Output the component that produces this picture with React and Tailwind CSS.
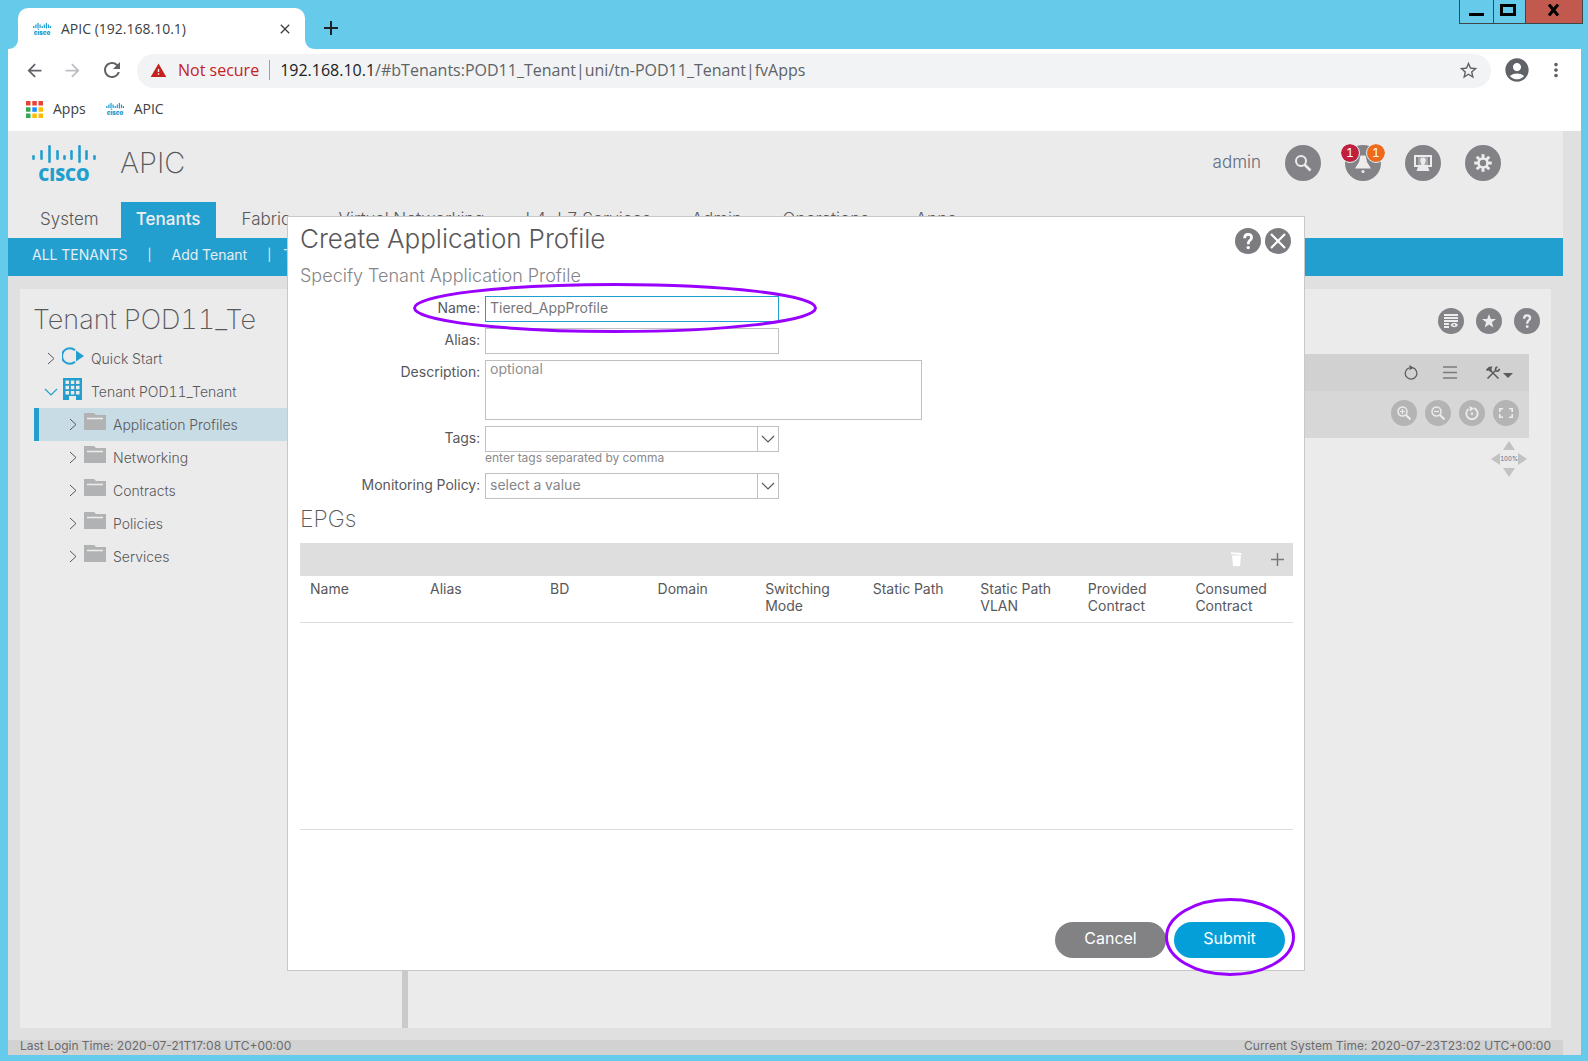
import React from "react";
import { MdAccountCircle, MdArrowBack, MdArrowForward, MdClose, MdMoreVert, MdRefresh, MdStarBorder, MdWarning } from "react-icons/md";

const UI = "font-['Inter',sans-serif] tabular-nums";
const CHROME = "font-['Open_Sans','Noto_Sans',sans-serif]";

function CiscoLogo() {
  const bars = [[1, 10, 15], [9, 5, 15], [17, 0, 18], [25, 5, 15], [32, 10, 15], [39, 5, 15], [47, 0, 18], [54, 5, 15], [62, 10, 15]];
  return (
    <svg viewBox="0 0 64 37" className="h-[37px] w-16 shrink-0 overflow-visible text-[#239fcf]" role="img" aria-label="Cisco">
      {bars.map(([x, a, b]) => (
        <line key={x} x1={x + 0.5} x2={x + 0.5} y1={a + 1.2} y2={b - 1.2} stroke="currentColor" strokeWidth="2.6" strokeLinecap="round" />
      ))}
      <text x="32" y="36" textAnchor="middle" fontFamily="Open Sans, sans-serif" fontWeight="800" fontSize="17" fill="currentColor">CISCO</text>
    </svg>
  );
}

function CiscoMark() {
  const bars = [[0.8, 3, 5], [2.9, 1.5, 5], [5, 0, 5.6], [7.1, 1.5, 5], [9.2, 3, 5], [11.3, 1.5, 5], [13.4, 0, 5.6], [15.5, 1.5, 5], [17.4, 3, 5]];
  return (
    <svg viewBox="0 0 18 12" className="h-3 w-[18px] shrink-0 overflow-visible text-[#1a9bd0]" aria-hidden="true">
      {bars.map(([x, a, b]) => (
        <line key={x} x1={x} x2={x} y1={a} y2={b} stroke="currentColor" strokeWidth="1.2" />
      ))}
      <text x="9" y="11.6" textAnchor="middle" fontFamily="Inter, sans-serif" fontWeight="900" fontSize="6" fill="currentColor">cisco</text>
    </svg>
  );
}

function Chevron({ down, className = "" }) {
  return down ? (
    <svg viewBox="0 0 14 8" className={"h-2 w-3.5 shrink-0 " + className} aria-hidden="true">
      <path d="M1 1l6 6 6-6" fill="none" stroke="currentColor" strokeWidth="1.2" />
    </svg>
  ) : (
    <svg viewBox="0 0 8 13" className={"h-[13px] w-2 shrink-0 " + className} aria-hidden="true">
      <path d="M1 1l6 5.500-6 5.500" fill="none" stroke="currentColor" strokeWidth="1" />
    </svg>
  );
}

function Folder() {
  return (
    <svg viewBox="0 0 22 17" className="h-[17px] w-[22px] shrink-0" aria-hidden="true">
      <path d="M0 0h10l2 2h10v15H0z" fill="#b1b2b3" />
      <path d="M3 5.500h16" stroke="#ebebeb" strokeWidth="1.600" />
    </svg>
  );
}

function QuestionGlyph({ className }) {
  return (
    <svg viewBox="0 0 26 26" className={className} aria-hidden="true">
      <path d="M9.600 10.200C9.600 7.600 11 6.300 13.100 6.300s3.500 1.300 3.500 3.200c0 2.800-3.300 2.900-3.300 5.900v.8" fill="none" stroke="currentColor" strokeWidth="2.700" />
      <circle cx="13.200" cy="19.600" r="1.700" fill="currentColor" />
    </svg>
  );
}

function Round({ label, size, tone = "bg-[#828287]", children }) {
  return (
    <button type="button" aria-label={label} className={"flex shrink-0 items-center justify-center rounded-full text-[#ececec] " + size + " " + tone}>
      {children}
    </button>
  );
}

function Browser() {
  return (
    <>
      <div className="flex h-[49px] items-end pl-2 pr-[5px]">
        <svg viewBox="0 0 10 10" className="size-2.5" aria-hidden="true"><path d="M10 0v10H0C6 10 10 6 10 0z" fill="#fff" /></svg>
        <div className="flex h-[41px] w-[287px] items-center rounded-t-[10px] bg-white pl-[15px] pr-3">
          <CiscoMark />
          <span className="ml-2.5 grow text-sm text-[#3c4043]">APIC (192.168.10.1)</span>
          <button type="button" aria-label="Close tab" className="text-[#3c4043]"><MdClose size={16} /></button>
        </div>
        <svg viewBox="0 0 10 10" className="size-2.5" aria-hidden="true"><path d="M0 0v10h10C4 10 0 6 0 0z" fill="#fff" /></svg>
        <button type="button" aria-label="New tab" className="mb-3.5 ml-[9px] text-[#202124]">
          <svg viewBox="0 0 14 14" className="size-3.5"><path d="M7 0v14M0 7h14" stroke="currentColor" strokeWidth="2" /></svg>
        </button>
        <div className="ml-auto flex h-6 self-start border-x border-b border-[#3f4648] text-black">
          <button type="button" aria-label="Minimize" className="flex w-[34px] justify-center border-r border-[#3f4648] pt-[13px]">
            <span className="h-[3px] w-[15px] bg-black" />
          </button>
          <button type="button" aria-label="Maximize" className="flex w-8 justify-center border-r border-[#3f4648] pt-1 pr-1">
            <span className="h-3 w-4 border-3 border-black" />
          </button>
          <button type="button" aria-label="Close window" className="flex w-14 justify-center bg-[#c1594f] pt-1 pr-0.5">
            <svg viewBox="0 0 13 12" className="h-3 w-[13px]"><path d="M2 0.500l9 11M11 0.500l-9 11" stroke="#000" strokeWidth="3" /></svg>
          </button>
        </div>
      </div>
      <div className="mr-[7px] ml-2 h-[82px] bg-white pt-[5px]">
        <div className="flex h-[34px] items-center">
          <button type="button" aria-label="Back" className="mb-0.5 ml-4 text-[#5f6368]"><MdArrowBack size={21} /></button>
          <button type="button" aria-label="Forward" className="mb-0.5 ml-[17px] text-[#bcbec1]"><MdArrowForward size={21} /></button>
          <button type="button" aria-label="Reload" className="mb-0.5 ml-[17px] text-[#5f6368]"><MdRefresh size={24} /></button>
          <div className="ml-[13px] flex h-[34px] grow items-center rounded-full bg-[#f1f3f4] pr-3 pb-0.5 pl-[13px]">
            <MdWarning size={17} className="text-[#c5221f]" />
            <span className="ml-[11px] text-base text-[#c5221f]">Not secure</span>
            <span className="mx-2.5 h-5 w-px bg-[#9aa0a6]" />
            <span className="grow text-base text-[#5f6368]"><span className="text-[#202124]">192.168.10.1</span>/#bTenants:POD11_Tenant|uni/tn-POD11_Tenant|fvApps</span>
            <button type="button" aria-label="Bookmark this page" className="text-[#5f6368]"><MdStarBorder size={21} /></button>
          </div>
          <button type="button" aria-label="Profile" className="mb-0.5 ml-3 text-[#5f6368]"><MdAccountCircle size={28} /></button>
          <button type="button" aria-label="Browser menu" className="mx-3.5 mb-0.5 text-[#5f6368]"><MdMoreVert size={22} /></button>
        </div>
        <div className="flex h-[42px] items-center text-sm text-[#3c4043]">
          <button type="button" className="ml-[18px] flex items-center gap-2.5">
            <svg viewBox="0 0 17 17" className="size-[17px]" aria-hidden="true">
              <path d="M0 0h4.500v4.500H0zM6.300 0h4.500v4.500H6.300zM12.500 0H17v4.500h-4.500z" fill="#ea4335" />
              <path d="M0 6.300h4.500v4.500H0zM0 12.500h4.500V17H0z" fill="#34a853" />
              <path d="M6.300 6.300h4.500v4.500H6.300z" fill="#1a8cff" />
              <path d="M12.500 6.300H17v4.500h-4.500zM6.300 12.500h4.500V17H6.300zM12.500 12.500H17V17h-4.500z" fill="#fbbc04" />
            </svg>
            Apps
          </button>
          <a href="#apic" className="ml-5 flex items-center gap-2.5"><CiscoMark />APIC</a>
        </div>
      </div>
    </>
  );
}

const TABS = [
  ["Fabric", "w-[58px]"], ["Virtual Networking", "w-[148px]"], ["L4-L7 Services", "w-[127px]"],
  ["Admin", "w-[52px]"], ["Operations", "w-[94px]"], ["Apps", "w-10"],
];

function GearIcon() {
  return (
    <svg viewBox="-9 -9 18 18" className="size-[18px]" aria-hidden="true">
      <circle r="4.500" fill="none" stroke="currentColor" strokeWidth="2.600" />
      {[0, 45, 90, 135, 180, 225, 270, 315].map((a) => (
        <path key={a} d="M-1.500 -8.800h3V-5h-3z" fill="currentColor" transform={"rotate(" + a + ")"} />
      ))}
    </svg>
  );
}

function Header() {
  return (
    <header className="mr-[18px] bg-[#ebebeb]">
      <div className="flex h-[71px] items-center pr-[62px] pb-[7px] pl-6">
        <CiscoLogo />
        <h1 className="ml-6 text-[29px] leading-8 font-extralight text-[#58585b]">APIC</h1>
        <span className="ml-auto text-[17px] font-light text-[#5c6a7c]">admin</span>
        <div className="ml-6 flex gap-6">
          <Round label="Search" size="size-9">
            <svg viewBox="0 0 18 18" className="size-[18px]"><circle cx="7" cy="7" r="5" fill="none" stroke="currentColor" strokeWidth="2" /><path d="M10.500 10.500l6 6" stroke="currentColor" strokeWidth="2.600" /></svg>
          </Round>
          <div className="relative">
            <Round label="Alerts" size="size-9">
              <svg viewBox="0 0 18 18" className="mt-0.5 size-[18px]"><path d="M6.500 0.500h5l1.500 6.500 4 6.500H1l4-6.500z" fill="currentColor" /><circle cx="9" cy="16.500" r="1.500" fill="currentColor" /></svg>
            </Round>
            <span className="absolute -top-px -left-1 flex size-[18px] items-center justify-center rounded-full bg-[#c0203d] text-xs text-white outline outline-[#ebebeb]">1</span>
            <span className="absolute -top-px -right-1 flex size-[18px] items-center justify-center rounded-full bg-[#f06a1c] text-xs text-white outline outline-[#ebebeb]">1</span>
          </div>
          <Round label="Sessions" size="size-9">
            <svg viewBox="0 0 18 16" className="h-4 w-[18px]"><path d="M0 0h18v12H0z" fill="currentColor" /><path d="M2 2h14v8H2z" fill="#828287" /><path d="M4 2h10v8H4z" fill="currentColor" opacity=".35" /><path d="M9 2.500c2 0 3 1.500 2.700 3.500-.2 1.500-1.200 2-1.200 4h-3c0-2-1-2.500-1.200-4C6 4 7 2.500 9 2.500zM4 12h10l1.500 4h-13z" fill="currentColor" /></svg>
          </Round>
          <Round label="Settings" size="size-9"><GearIcon /></Round>
        </div>
      </div>
      <nav aria-label="Main" className="flex h-9 text-[17px] font-light text-[#58585b]">
        <a href="#system" className="flex items-center pr-[22px] pl-8">System</a>
        <a href="#tenants" aria-current="page" className="flex w-[95px] items-center justify-center bg-[#239fcf] font-medium text-[#f0f0f0]">Tenants</a>
        <div className="flex items-center gap-[39px] pl-[26px]">
          {TABS.map(([t, w]) => <a key={t} href={"#" + t} className={"whitespace-nowrap " + w}>{t}</a>)}
        </div>
      </nav>
      <nav aria-label="Tenants" className="flex h-[38px] items-center bg-[#239fcf] pb-1 pl-6 text-sm text-[#e6eef2]">
        <a href="#all">ALL TENANTS</a>
        <span className="mx-5 text-xs">|</span>
        <a href="#add">Add Tenant</a>
        <span className="mr-3 ml-5 text-xs">|</span>
        <span>Tenant</span>
      </nav>
    </header>
  );
}

const FOLDERS = ["Application Profiles", "Networking", "Contracts", "Policies", "Services"];

function Sidebar() {
  return (
    <aside className="w-[382px] pt-3.5 pl-[13px]">
      <h2 className="h-[39px] text-[27px] leading-[34px] font-extralight whitespace-nowrap text-[#58585b]">Tenant POD11_Te</h2>
      <ul className="text-sm font-light text-[#58585b]">
        <li className="flex h-[33px] items-center pl-3.5">
          <Chevron />
          <svg viewBox="0 0 22 18" className="mb-1.5 ml-[7px] h-[18px] w-[22px]" aria-hidden="true"><path d="M13 3.200A7.800 7.800 0 1 0 13 14.800" fill="none" stroke="#239fcf" strokeWidth="2" /><path d="M14 3.500l8 5.500-8 5.500z" fill="#239fcf" /></svg>
          <a href="#quick-start" className="ml-[7px]">Quick Start</a>
        </li>
        <li className="flex h-[33px] items-center pl-[11px]">
          <Chevron down className="text-[#239fcf]" />
          <svg viewBox="0 0 19 22" className="mb-1.5 ml-[5px] h-[22px] w-[19px]" aria-hidden="true">
            <path d="M0 0h19v22h-6v-4H6v4H0z" fill="#239fcf" />
            <path d="M2.500 2.500h3.500v3.500H2.500zM7.800 2.500h3.500v3.500H7.800zM13 2.500h3.500v3.500H13zM2.500 7.800h3.500v3.500H2.500zM7.800 7.800h3.500v3.500H7.800zM13 7.800h3.500v3.500H13zM2.500 13h3.500v3.500H2.500zM7.800 13h3.500v3.500H7.800zM13 13h3.500v3.500H13z" fill="#ebebeb" />
          </svg>
          <a href="#tenant" className="ml-[9px]">Tenant POD11_Tenant</a>
        </li>
        {FOLDERS.map((f, i) => (
          <li key={f} className={"ml-px flex h-[33px] items-center border-l-5 pl-[30px] " + (i === 0 ? "border-[#239fcf] bg-[#c8dce5]" : "border-transparent")}>
            <Chevron />
            <span className="mb-1.5 ml-[7px]"><Folder /></span>
            <a href={"#" + f} className="ml-[7px]">{f}</a>
          </li>
        ))}
      </ul>
    </aside>
  );
}

function Workspace() {
  const pale = "bg-[#b4b4b4]";
  return (
    <section className="grow pt-[19px]">
      <div className="flex justify-end gap-3 pr-[11px]">
        <Round label="Show tasks" size="size-[26px]">
          <svg viewBox="0 0 14 14" className="size-3.5"><path d="M0 1h14M0 4h14M0 7h14M0 10h5M0 13h5" stroke="currentColor" strokeWidth="1.800" /><path d="M6.500 11c2-3 5.500-3 7.500 0-2 3-5.500 3-7.500 0z" fill="currentColor" /><circle cx="10.200" cy="11" r="1" fill="#828287" /></svg>
        </Round>
        <Round label="Favorite" size="size-[26px]">
          <svg viewBox="0 0 14 14" className="size-3.5"><path d="M7 0l1.800 4.900 5.200.2-4.100 3.200 1.400 5.100L7 10.500l-4.300 2.900 1.400-5.100L0 5.100l5.200-.2z" fill="currentColor" /></svg>
        </Round>
        <Round label="Help" size="size-[26px]"><QuestionGlyph className="size-[22px]" /></Round>
      </div>
      <div className="mt-5 mr-[22px]">
        <div className="flex h-[37px] items-center justify-end bg-[#d1d1d1] pr-4 text-[#5b5b5e]">
          <button type="button" aria-label="Refresh">
            <svg viewBox="0 0 14 15" className="h-[15px] w-3.5"><path d="M8.500 2.700A5.800 5.800 0 1 1 5 2.900" fill="none" stroke="currentColor" strokeWidth="1.200" /><path d="M5.500 0l4 2.700-4 2.500z" fill="currentColor" /></svg>
          </button>
          <button type="button" aria-label="List" className="ml-[25px]">
            <svg viewBox="0 0 14 13" className="h-[13px] w-3.5"><path d="M0 1h14M0 6.500h14M0 12h14" stroke="#7b7b7e" strokeWidth="1.500" /></svg>
          </button>
          <button type="button" aria-label="Tools" className="ml-[29px] flex items-end gap-[3px]">
            <svg viewBox="0 0 14 13" className="h-[13px] w-3.5"><path d="M4.500 4.500l8 8M1.500 12.500l8-8" stroke="currentColor" strokeWidth="1.500" /><path d="M0 3.500L3 .8 6.500.5 5.500 3 6 4.500 4.200 6 2.800 4.600 1 5z" fill="currentColor" /><path d="M11.500 1.200C9 1.500 8.800 4.800 11 5.200c1.500 0 2.300-1 2.300-2.500" fill="none" stroke="currentColor" strokeWidth="1.700" /></svg>
            <svg viewBox="0 0 10 5" className="mb-px h-[5px] w-2.5"><path d="M0 0h10L5 5z" fill="currentColor" /></svg>
          </button>
        </div>
        <div className="flex h-[47px] items-center justify-end gap-2 bg-[#d7d7d8] pr-2.5 pb-[3px]">
          <Round label="Zoom in" size="size-[26px]" tone={pale}>
            <svg viewBox="0 0 14 14" className="size-3.5"><circle cx="5.500" cy="5.500" r="4.500" fill="none" stroke="currentColor" strokeWidth="1.500" /><path d="M3 5.500h5M5.500 3v5" stroke="currentColor" strokeWidth="1.200" /><path d="M9 9l4.500 4.500" stroke="currentColor" strokeWidth="2" /></svg>
          </Round>
          <Round label="Zoom out" size="size-[26px]" tone={pale}>
            <svg viewBox="0 0 14 14" className="size-3.5"><circle cx="5.500" cy="5.500" r="4.500" fill="none" stroke="currentColor" strokeWidth="1.500" /><path d="M3 5.500h5" stroke="currentColor" strokeWidth="1.200" /><path d="M9 9l4.500 4.500" stroke="currentColor" strokeWidth="2" /></svg>
          </Round>
          <Round label="Reset zoom" size="size-[26px]" tone={pale}>
            <svg viewBox="0 0 14 14" className="size-3.5"><path d="M9 2.200A5.700 5.700 0 1 1 3.500 3" fill="none" stroke="currentColor" strokeWidth="1.800" /><path d="M4.500 0l4.500 2.500-4 3z" fill="currentColor" /><circle cx="7" cy="7.700" r="1.200" fill="currentColor" /></svg>
          </Round>
          <Round label="Fit" size="size-[26px]" tone={pale}>
            <svg viewBox="0 0 14 10" className="h-2.5 w-3.5"><path d="M4 .8H.8V4M10 .8h3.200V4M4 9.200H.8V6M10 9.200h3.200V6" fill="none" stroke="currentColor" strokeWidth="1.600" /></svg>
          </Round>
        </div>
        <div className="flex justify-end pt-[3px] pr-0.5">
          <div className="grid grid-cols-[9px_18px_9px] place-items-center gap-y-[3px] text-[#c2c2c2]">
            <svg viewBox="0 0 12 9" className="col-start-2 h-[9px] w-3"><path d="M6 0l6 9H0z" fill="currentColor" /></svg>
            <svg viewBox="0 0 9 12" className="col-start-1 h-3 w-[9px]"><path d="M9 0v12L0 6z" fill="currentColor" /></svg>
            <span className="text-[6px] leading-none text-[#5c6a7c]">100%</span>
            <svg viewBox="0 0 9 12" className="h-3 w-[9px]"><path d="M0 0v12l9-6z" fill="currentColor" /></svg>
            <svg viewBox="0 0 12 9" className="col-start-2 h-[9px] w-3"><path d="M6 9l6-9H0z" fill="currentColor" /></svg>
          </div>
        </div>
      </div>
    </section>
  );
}

const FIELD = "block border border-[#c0c0c2] bg-white px-1 text-[#85858a] placeholder:text-[#8f8f92] outline-none";

function Row({ id, label, children }) {
  return (
    <div className="flex items-start gap-[5px]">
      <label htmlFor={id} className="w-[180px] shrink-0 text-right leading-6">{label}</label>
      {children}
    </div>
  );
}

const COLUMNS = ["Name", "Alias", "BD", "Domain", "Switching Mode", "Static Path", "Static Path VLAN", "Provided Contract", "Consumed Contract"];

function Dialog() {
  return (
    <div role="dialog" aria-labelledby="dialog-title" className="flex h-[755px] w-[1018px] flex-col border border-[#c8c8c8] bg-white pr-[11px] pl-3 text-sm text-[#58585b]">
      <div className="flex justify-between">
        <h2 id="dialog-title" className="pt-1.5 text-[26px] leading-8 font-light">Create Application Profile</h2>
        <div className="flex gap-1 pt-[11px] pr-0.5">
          <button type="button" aria-label="Help" className="size-[26px] rounded-full bg-[#7b7b80] text-white"><QuestionGlyph className="size-[26px]" /></button>
          <button type="button" aria-label="Close" className="flex size-[26px] items-center justify-center rounded-full bg-[#7b7b80] text-white">
            <svg viewBox="0 0 16 16" className="size-4"><path d="M1 1l14 14M15 1L1 15" stroke="currentColor" strokeWidth="2.200" /></svg>
          </button>
        </div>
      </div>
      <h3 className="mt-[7px] text-lg leading-7 font-light text-[#858588]">Specify Tenant Application Profile</h3>
      <form className="mt-1.5 flex flex-col gap-1.5">
        <div className="relative">
          <Row id="name" label="Name:">
            <input id="name" defaultValue="Tiered_AppProfile" className="h-[26px] w-[294px] border border-[#1d9fd3] bg-white px-1 pb-0.5 text-[#77777a] outline-none" />
          </Row>
          <svg viewBox="0 0 404 50" className="pointer-events-none absolute -top-[13px] left-[113px] h-[50px] w-[404px]" aria-hidden="true"><ellipse cx="202" cy="25" rx="200.500" ry="23.500" fill="none" stroke="#9900ff" strokeWidth="3" /></svg>
        </div>
        <Row id="alias" label="Alias:"><input id="alias" className={"h-[26px] w-[294px] " + FIELD} /></Row>
        <Row id="description" label="Description:"><textarea id="description" placeholder="optional" className={"h-[60px] w-[437px] resize-none leading-4 " + FIELD} /></Row>
        <Row id="tags" label="Tags:">
          <div>
            <div className="flex h-[26px] w-[294px] border border-[#c0c0c2]">
              <input id="tags" className="min-w-0 grow px-1 outline-none" />
              <button type="button" aria-label="Show tags" className="flex w-[21px] items-center justify-center border-l border-[#c0c0c2]"><Chevron down /></button>
            </div>
            <p className="h-[15px] text-xs leading-3 text-[#8a8a8d]">enter tags separated by comma</p>
          </div>
        </Row>
        <Row id="policy" label="Monitoring Policy:">
          <div className="relative">
            <select id="policy" className={"h-[26px] w-[294px] appearance-none pb-0.5 " + FIELD}><option>select a value</option></select>
            <span className="pointer-events-none absolute top-px right-px bottom-px flex w-[21px] items-center justify-center border-l border-[#c0c0c2]"><Chevron down /></span>
          </div>
        </Row>
      </form>
      <h3 className="mt-[5px] text-[23px] leading-[30px] font-extralight">EPGs</h3>
      <div className="mt-[9px] flex h-[33px] shrink-0 items-center justify-end bg-[#dedede] pr-[9px]">
        <button type="button" aria-label="Delete" className="text-white">
          <svg viewBox="0 0 11 14" className="h-3.5 w-[11px]"><path d="M0 0.300L10.500 1v2L0 2zM1 3.500h9L9 14H2z" fill="currentColor" /></svg>
        </button>
        <button type="button" aria-label="Add" className="ml-[29px]">
          <svg viewBox="0 0 13 13" className="size-[13px]"><path d="M6.500 0v13M0 6.500h13" stroke="#77777a" strokeWidth="1.500" /></svg>
        </button>
      </div>
      <div className="h-[254px] border-b border-[#dcdcdc]">
        <table className="w-full table-fixed">
          <thead>
            <tr className="h-[47px] border-b border-[#dcdcdc]">
              {COLUMNS.map((c, i) => (
                <th key={c} scope="col" className={"pt-1 pr-2 pl-2.5 text-left align-top leading-[17px] font-normal " + (i < 2 ? "w-[120px]" : "")}>{c}</th>
              ))}
            </tr>
          </thead>
        </table>
      </div>
      <div className="mt-auto flex justify-end gap-2 pr-2 pb-3 text-base text-white">
        <button type="button" className="h-9 w-[111px] rounded-full bg-[#828285] pb-1">Cancel</button>
        <div className="relative">
          <button type="button" className="h-9 w-[111px] rounded-full bg-[#049fd9] pb-1">Submit</button>
          <svg viewBox="0 0 130 78" className="pointer-events-none absolute -top-6 -left-[9px] h-[78px] w-[130px] max-w-none" aria-hidden="true"><ellipse cx="65" cy="39" rx="63.500" ry="37.500" fill="none" stroke="#9900ff" strokeWidth="3" /></svg>
        </div>
      </div>
    </div>
  );
}

export default function App() {
  return (
    <div className={"flex min-h-screen flex-col bg-[#66caea] pb-1.5 " + CHROME}>
      <Browser />
      <main className={"relative mr-[7px] ml-2 flex grow flex-col overflow-hidden bg-[#e0e0e0] " + UI}>
        <Header />
        <div className="mt-[13px] mr-[30px] mb-3 ml-3 flex grow bg-[#ebebeb]">
          <Sidebar />
          <div className="w-1.5 bg-[#cbcaca]" />
          <Workspace />
        </div>
        <footer className="mr-[18px] flex h-[15px] items-center justify-between bg-[#d2d2d2] px-3 pb-1 text-xs leading-none text-[#6a6a6d] normal-nums">
          <span>Last Login Time: 2020-07-21T17:08 UTC+00:00</span>
          <span>Current System Time: 2020-07-23T23:02 UTC+00:00</span>
        </footer>
        <div className="absolute inset-0 flex items-center justify-center pl-[3px]"><Dialog /></div>
      </main>
    </div>
  );
}
